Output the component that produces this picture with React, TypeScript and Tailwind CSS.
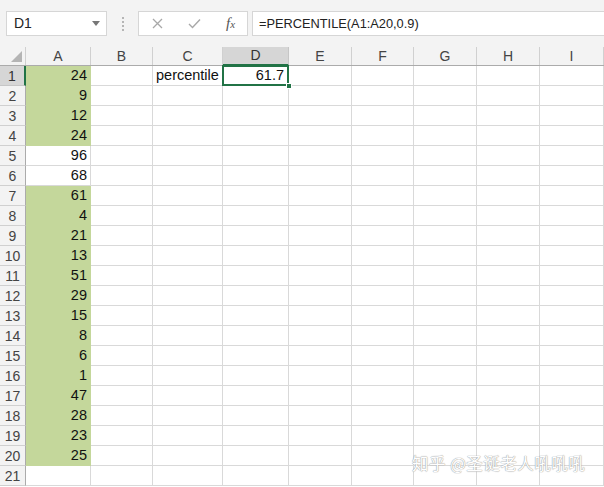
import React from 'react';

const cols = ['A', 'B', 'C', 'D', 'E', 'F', 'G', 'H', 'I'];
const widths = [65, 62, 70, 66, 63, 62, 63, 63, 64];
const colA = [24, 9, 12, 24, 96, 68, 61, 4, 21, 13, 51, 29, 15, 8, 6, 1, 47, 28, 23, 25];
// rows 5 and 6 have no fill
const noFill = [5, 6];

const font = { fontFamily: '"Liberation Sans", Arial, sans-serif' };

export default function App() {
  return (
    <div className="w-[604px] h-[487px] overflow-hidden bg-white relative" style={font}>
      {/* Formula bar */}
      <div className="h-[47px] bg-[#f3f3f3] flex items-start pt-[11px] pl-[6px]">
        <div className="w-[101px] h-[25px] bg-white border border-[#d6d6d6] flex items-center pl-[7px] pr-[6px] text-[14px] text-[#222]">
          <span className="flex-1">D1</span>
          <svg width="8" height="5" viewBox="0 0 8 5">
            <path d="M0 0h8L4 5z" fill="#777" />
          </svg>
        </div>
        <div className="w-[31px] h-[25px] flex flex-col items-center justify-center gap-[2px]">
          <span className="w-[2px] h-[2px] bg-[#b5b5b5]" />
          <span className="w-[2px] h-[2px] bg-[#b5b5b5]" />
          <span className="w-[2px] h-[2px] bg-[#b5b5b5]" />
          <span className="w-[2px] h-[2px] bg-[#b5b5b5]" />
        </div>
        <div className="w-[110px] h-[25px] bg-white border border-[#d6d6d6] flex items-center">
          <svg className="ml-[13px]" width="11" height="11" viewBox="0 0 11 11">
            <path d="M1 1L10 10M10 1L1 10" stroke="#a8a8a8" strokeWidth="1.3" />
          </svg>
          <svg className="ml-[25px]" width="13" height="11" viewBox="0 0 13 11">
            <path d="M1 6L4.5 9.5L12 1.5" stroke="#a8a8a8" strokeWidth="1.4" fill="none" />
          </svg>
          <span
            className="ml-[25px] text-[15px] italic text-[#555] leading-none"
            style={{ fontFamily: '"Liberation Serif", "Times New Roman", serif' }}
          >
            f<span className="text-[11px]">x</span>
          </span>
        </div>
        <div className="ml-[4px] flex-1 h-[25px] bg-white border border-[#d6d6d6] border-r-0 flex items-center pl-[6px] text-[12.8px] text-[#222]">
          =PERCENTILE(A1:A20,0.9)
        </div>
      </div>

      {/* Column headers */}
      <div className="flex h-[19px] bg-[#f3f3f3] border-b border-[#ababab]">
        <div className="w-[26px] border-r border-[#d0d0d0] relative shrink-0">
          <svg className="absolute right-[3px] bottom-[3px]" width="11" height="11" viewBox="0 0 11 11">
            <path d="M11 0V11H0z" fill="#b4b4b4" />
          </svg>
        </div>
        {cols.map((c, i) => (
          <div
            key={c}
            style={{ width: widths[i] }}
            className={
              c === 'D'
                ? 'shrink-0 flex items-center justify-center text-[14px] text-[#333] border-r border-[#c6c6c6] bg-[#d6d6d6] border-b-2 border-b-[#217346] -mb-[1px]'
                : 'shrink-0 flex items-center justify-center text-[14px] text-[#444] border-r border-[#d0d0d0]'
            }
          >
            {c}
          </div>
        ))}
      </div>

      {/* Rows */}
      {Array.from({ length: 21 }, (_, r) => {
        const row = r + 1;
        const val = row <= 20 ? colA[r] : null;
        const green = row <= 20 && !noFill.includes(row);
        return (
          <div key={row} className="flex h-[20px]">
            <div
              className={
                row === 1
                  ? 'w-[26px] shrink-0 bg-[#d6d6d6] border-r-2 border-[#217346] border-b border-b-[#c6c6c6] flex items-center justify-center pt-[1px] text-[14px] text-[#333]'
                  : 'w-[26px] shrink-0 bg-[#f3f3f3] border-r border-[#ababab] border-b border-b-[#d0d0d0] flex items-center justify-center pt-[1px] text-[14px] text-[#444]'
              }
            >
              {row}
            </div>
            {cols.map((c, i) => {
              let content: React.ReactNode = null;
              let cls = 'shrink-0 border-r border-b border-[#d9d9d9] flex items-center pt-[1px] text-[14.5px] text-[#111]';
              if (c === 'A') {
                if (green) cls += ' bg-[#c4d79b] border-r-[#c4d79b] border-b-[#c4d79b]';
                if (val !== null) {
                  cls += ' justify-end pr-[3px]';
                  content = val;
                }
              }
              if (row === 1 && c === 'C') {
                cls += ' pl-[3px]';
                content = 'percentile';
              }
              if (row === 1 && c === 'D') {
                cls += ' justify-end pr-[4px] relative';
                content = (
                  <>
                    61.7
                    <div className="absolute -left-[1px] -top-[1px] w-[67px] h-[21px] border-2 border-[#217346]" />
                    <div className="absolute -right-[4px] -bottom-[4px] w-[6px] h-[6px] bg-[#217346] border border-white" />
                  </>
                );
              }
              return (
                <div key={c} style={{ width: widths[i] }} className={cls}>
                  {content}
                </div>
              );
            })}
          </div>
        );
      })}

      {/* Watermark */}
      <div
        className="absolute left-[412px] top-[451px] text-[16.5px] text-white tracking-[0.5px]"
        style={{
          fontFamily: '"Noto Sans CJK SC", "Noto Sans", sans-serif',
          textShadow: '0 0 1px #999, 0 0 1px #999',
        }}
      >
        知乎 @圣诞老人吼吼吼
      </div>
    </div>
  );
}
